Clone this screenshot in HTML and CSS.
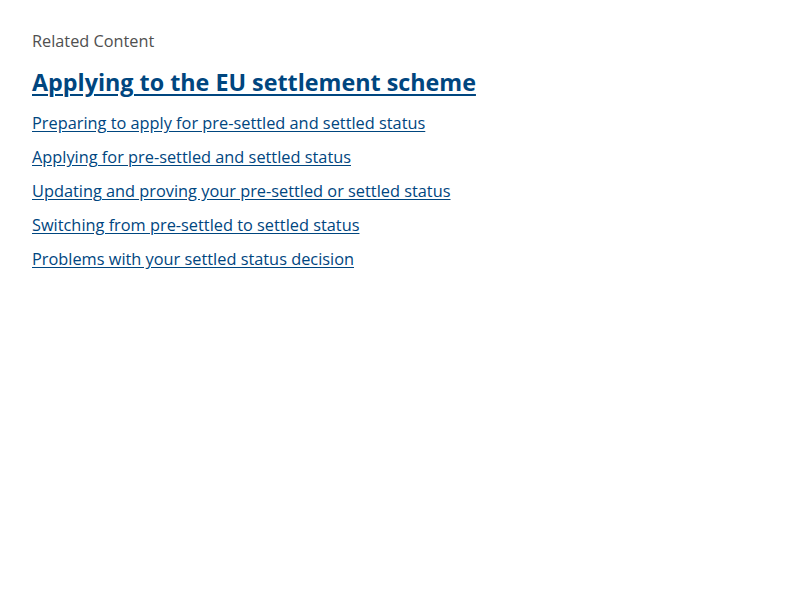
FILE: index.html
```html
<!DOCTYPE html>
<html lang="en">
<head>
<meta charset="utf-8">
<title>Related Content</title>
<link rel="stylesheet" href="styles.css">
</head>
<body>
<aside class="related">
  <p class="related-label">Related Content</p>
  <h2 class="related-title"><a href="#">Applying to the EU settlement scheme</a></h2>
  <ul class="related-list">
    <li><a href="#">Preparing to apply for pre-settled and settled status</a></li>
    <li><a href="#">Applying for pre-settled and settled status</a></li>
    <li><a href="#">Updating and proving your pre-settled or settled status</a></li>
    <li><a href="#">Switching from pre-settled to settled status</a></li>
    <li><a href="#">Problems with your settled status decision</a></li>
  </ul>
</aside>
</body>
</html>
```
FILE: styles.css
```css
html, body {
  margin: 0;
  padding: 0;
  background: #ffffff;
}
body {
  font-family: "Open Sans", "Liberation Sans", sans-serif;
}
.related {
  padding: 30px 32px;
}
.related-label {
  margin: 0;
  font-size: 16.3px;
  line-height: 22px;
  color: #505050;
}
.related-title {
  margin: 13px 0 0;
  font-size: 23.3px;
  line-height: 34px;
  font-weight: 700;
}
.related-title a {
  color: #00467f;
  text-decoration: underline;
  text-decoration-thickness: 2px;
  text-underline-offset: 3px;
}
.related-list {
  list-style: none;
  margin: 13px 0 0;
  padding: 0;
  display: flex;
  flex-direction: column;
  gap: 12px;
}
.related-list li {
  font-size: 16.34px;
  line-height: 22px;
}
.related-list a {
  color: #00467f;
  text-decoration: underline;
  text-underline-offset: 2px;
}
```
